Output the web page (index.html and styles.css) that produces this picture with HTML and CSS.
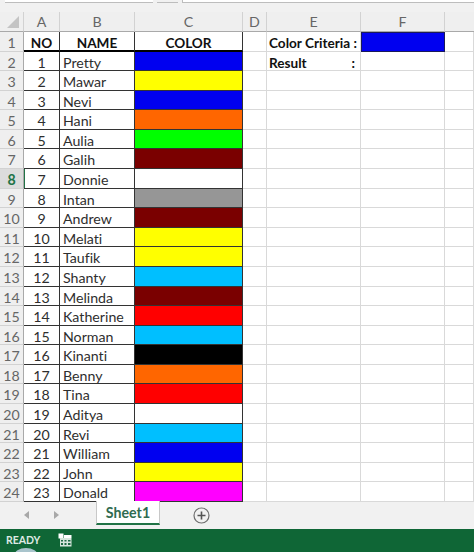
FILE: index.html
```html
<!DOCTYPE html>
<html lang="en">
<head>
    <meta charset="UTF-8">
    <title>Sheet1</title>
    <link rel="stylesheet" href="styles.css">
</head>
<body>
<!--formula bar remains-->
<div class="top_strip">
    <div class="top_box box_a"></div>
    <div class="top_box box_b"></div>
    <div class="top_box box_c"></div>
</div>
<!--sheet-->
<div class="sheet">
    <!--column headers-->
    <div class="head corner"><svg width="14" height="14" viewBox="0 0 14 14"><path d="M13 1V13H1Z" fill="#c4c4c4"/></svg></div>
    <div class="head">A</div><div class="head">B</div><div class="head">C</div><div class="head">D</div><div class="head">E</div><div class="head">F</div><div class="head head_end"></div>

    <div class="rownum">1</div><div class="c tb ctr bold thick">NO</div><div class="c tb ctr bold thick">NAME</div><div class="c tb ctr bold thick">COLOR</div><div class="c"></div><div class="c bold label">Color Criteria :</div><div class="c crit"></div><div class="c"></div>
    <div class="rownum">2</div><div class="c tb ctr">1</div><div class="c tb">Pretty</div><div class="c tb blue"></div><div class="c"></div><div class="c bold label result"><span>Result</span><span>:</span></div><div class="c"></div><div class="c"></div>
    <div class="rownum">3</div><div class="c tb ctr">2</div><div class="c tb">Mawar</div><div class="c tb yellow"></div><div class="c"></div><div class="c"></div><div class="c"></div><div class="c"></div>
    <div class="rownum">4</div><div class="c tb ctr">3</div><div class="c tb">Nevi</div><div class="c tb blue"></div><div class="c"></div><div class="c"></div><div class="c"></div><div class="c"></div>
    <div class="rownum">5</div><div class="c tb ctr">4</div><div class="c tb">Hani</div><div class="c tb orange"></div><div class="c"></div><div class="c"></div><div class="c"></div><div class="c"></div>
    <div class="rownum">6</div><div class="c tb ctr">5</div><div class="c tb">Aulia</div><div class="c tb green"></div><div class="c"></div><div class="c"></div><div class="c"></div><div class="c"></div>
    <div class="rownum">7</div><div class="c tb ctr">6</div><div class="c tb">Galih</div><div class="c tb maroon"></div><div class="c"></div><div class="c"></div><div class="c"></div><div class="c"></div>
    <div class="rownum current">8</div><div class="c tb ctr active">7</div><div class="c tb">Donnie</div><div class="c tb"></div><div class="c"></div><div class="c"></div><div class="c"></div><div class="c"></div>
    <div class="rownum">9</div><div class="c tb ctr">8</div><div class="c tb">Intan</div><div class="c tb gray"></div><div class="c"></div><div class="c"></div><div class="c"></div><div class="c"></div>
    <div class="rownum">10</div><div class="c tb ctr">9</div><div class="c tb">Andrew</div><div class="c tb maroon"></div><div class="c"></div><div class="c"></div><div class="c"></div><div class="c"></div>
    <div class="rownum">11</div><div class="c tb ctr">10</div><div class="c tb">Melati</div><div class="c tb yellow"></div><div class="c"></div><div class="c"></div><div class="c"></div><div class="c"></div>
    <div class="rownum">12</div><div class="c tb ctr">11</div><div class="c tb">Taufik</div><div class="c tb yellow"></div><div class="c"></div><div class="c"></div><div class="c"></div><div class="c"></div>
    <div class="rownum">13</div><div class="c tb ctr">12</div><div class="c tb">Shanty</div><div class="c tb sky"></div><div class="c"></div><div class="c"></div><div class="c"></div><div class="c"></div>
    <div class="rownum">14</div><div class="c tb ctr">13</div><div class="c tb">Melinda</div><div class="c tb maroon"></div><div class="c"></div><div class="c"></div><div class="c"></div><div class="c"></div>
    <div class="rownum">15</div><div class="c tb ctr">14</div><div class="c tb">Katherine</div><div class="c tb red"></div><div class="c"></div><div class="c"></div><div class="c"></div><div class="c"></div>
    <div class="rownum">16</div><div class="c tb ctr">15</div><div class="c tb">Norman</div><div class="c tb sky"></div><div class="c"></div><div class="c"></div><div class="c"></div><div class="c"></div>
    <div class="rownum">17</div><div class="c tb ctr">16</div><div class="c tb">Kinanti</div><div class="c tb black"></div><div class="c"></div><div class="c"></div><div class="c"></div><div class="c"></div>
    <div class="rownum">18</div><div class="c tb ctr">17</div><div class="c tb">Benny</div><div class="c tb orange"></div><div class="c"></div><div class="c"></div><div class="c"></div><div class="c"></div>
    <div class="rownum">19</div><div class="c tb ctr">18</div><div class="c tb">Tina</div><div class="c tb red"></div><div class="c"></div><div class="c"></div><div class="c"></div><div class="c"></div>
    <div class="rownum">20</div><div class="c tb ctr">19</div><div class="c tb">Aditya</div><div class="c tb"></div><div class="c"></div><div class="c"></div><div class="c"></div><div class="c"></div>
    <div class="rownum">21</div><div class="c tb ctr">20</div><div class="c tb">Revi</div><div class="c tb sky"></div><div class="c"></div><div class="c"></div><div class="c"></div><div class="c"></div>
    <div class="rownum">22</div><div class="c tb ctr">21</div><div class="c tb">William</div><div class="c tb blue"></div><div class="c"></div><div class="c"></div><div class="c"></div><div class="c"></div>
    <div class="rownum">23</div><div class="c tb ctr">22</div><div class="c tb">John</div><div class="c tb yellow"></div><div class="c"></div><div class="c"></div><div class="c"></div><div class="c"></div>
    <div class="rownum">24</div><div class="c tb ctr">23</div><div class="c tb">Donald</div><div class="c tb magenta"></div><div class="c"></div><div class="c"></div><div class="c"></div><div class="c"></div>
</div>
<!--tab bar-->
<div class="tabs">
    <span class="tab_nav"><svg width="6" height="8" viewBox="0 0 6 8"><path d="M5 0V8L0 4Z" fill="#a8a8a8"/></svg></span>
    <span class="tab_nav"><svg width="6" height="8" viewBox="0 0 6 8"><path d="M1 0V8L6 4Z" fill="#a8a8a8"/></svg></span>
    <div class="tab">Sheet1</div>
    <svg class="tab_add" width="17" height="17" viewBox="0 0 17 17"><circle cx="8.5" cy="8.5" r="7.5" fill="none" stroke="#6e6e6e" stroke-width="1.2"/><path d="M8.5 4.5V12.5M4.5 8.5H12.5" stroke="#555" stroke-width="1.6"/></svg>
</div>
<!--status bar-->
<div class="status">
    <span class="ready">READY</span>
    <svg class="status_icon" width="14" height="14" viewBox="0 0 14 14"><rect x="0.5" y="0.5" width="5" height="5" fill="#fff"/><rect x="2" y="5" width="11.5" height="8.5" fill="#d5e6dc"/><path d="M6 2H13.5V5H6Z" fill="#fff"/><path d="M3 7H5V8.5H3ZM6.5 7H8.5V8.5H6.5ZM10 7H12.5V8.5H10ZM3 10H5V12H3ZM6.5 10H8.5V12H6.5ZM10 10H12.5V12H10Z" fill="#1e6b45"/></svg>
    <span class="blob"></span>
</div>
</body>
</html>
```

FILE: styles.css
```css
*{
    margin: 0;
    padding: 0;
    box-sizing: border-box;
}
body
{
    width: 474px;
    height: 552px;
    overflow: hidden;
    background: #f1f1f1;
    font-family: Lato, "Open Sans", sans-serif;
    font-size: 14.2px;
    font-variant-ligatures: none;
    color: #2e2e2e;
}
.top_strip
{
    height: 12px;
    display: flex;
    align-items: flex-start;
    gap: 2px;
    padding-left: 5px;
}
.top_box
{
    height: 3px;
    background: #fff;
    border-bottom: 1px solid #bdbdbd;
}
.box_a
{
    width: 148px;
}
.box_b
{
    width: 21px;
    margin-left: 2px;
    background: #f1f1f1;
}
.box_c
{
    flex: 1;
    margin-left: 2px;
    border-left: 1px solid #bdbdbd;
}
.sheet
{
    display: grid;
    grid-template-columns: 24px 36px 75px 108px 24px 94px 84px 29px;
    grid-template-rows: 20px repeat(24, 19.58px);
    background: #fff;
    border-bottom: 1px solid #a8a8a8;
    height: 490px;
}
.head
{
    background: #efefef;
    border-right: 1px solid #d2d2d2;
    border-bottom: 1px solid #a9a9a9;
    text-align: center;
    color: #666;
    line-height: 20px;
}
.head_end
{
    border-right: none;
}
.corner
{
    display: flex;
    align-items: center;
    justify-content: flex-end;
    padding-right: 3px;
}
.rownum
{
    background: #efefef;
    border-right: 1px solid #a9a9a9;
    border-bottom: 1px solid #d2d2d2;
    text-align: center;
    color: #666;
    line-height: 21px;
}
.current
{
    background: #dcdcdc;
    color: #217346;
    font-weight: bold;
}
.c
{
    border-right: 1px solid #d9d9d9;
    border-bottom: 1px solid #d9d9d9;
    padding-left: 3px;
    line-height: 22px;
    white-space: nowrap;
    overflow: hidden;
}
.tb
{
    border-right: 1px solid #333;
    border-bottom: 1px solid #333;
}
.ctr
{
    text-align: center;
    padding-left: 0;
}
.bold
{
    font-size: 13.6px;
    font-weight: bold;
    color: #111;
}
.thick
{
    border-bottom: 2px solid #000;
}
.label
{
    padding-left: 2px;
}
.result
{
    display: flex;
    justify-content: space-between;
    padding-right: 5px;
}
.crit
{
    background: #0000f0;
    border: 1px solid #1a1a5a;
}
.active
{
    box-shadow: inset 1px 0 0 #217346;
}
.blue{background: #0000f0;}
.yellow{background: #ffff00;}
.orange{background: #ff6600;}
.green{background: #00ff00;}
.maroon{background: #7a0000;}
.gray{background: #969696;}
.sky{background: #00bfff;}
.red{background: #ff0000;}
.black{background: #000;}
.magenta{background: #ff00ff;}
.tabs
{
    height: 27px;
    display: flex;
    align-items: flex-start;
    background: #f1f1f1;
    padding-left: 24px;
}
.tab_nav
{
    width: 29px;
    height: 26px;
    display: flex;
    align-items: center;
}
.tab
{
    width: 64px;
    height: 24px;
    margin-left: 14px;
    margin-top: -1px;
    background: #fff;
    border-bottom: 2px solid #217346;
    border-left: 1px solid #c8c8c8;
    border-right: 1px solid #c8c8c8;
    color: #2f6b50;
    font-weight: bold;
    text-align: center;
    line-height: 24px;
}
.tab_add
{
    margin-left: 33px;
    margin-top: 5px;
}
.status
{
    position: relative;
    overflow: hidden;
    height: 23px;
    background: #0f6636;
    display: flex;
    align-items: center;
    padding-left: 6px;
    padding-bottom: 2px;
    color: #dfeae4;
    font-size: 10.5px;
    font-weight: bold;
}
.ready
{
    width: 52px;
}
.blob
{
    position: absolute;
    left: 14px;
    top: 19px;
    width: 24px;
    height: 16px;
    border-radius: 50%;
    background: #a9c4cc;
}
```
